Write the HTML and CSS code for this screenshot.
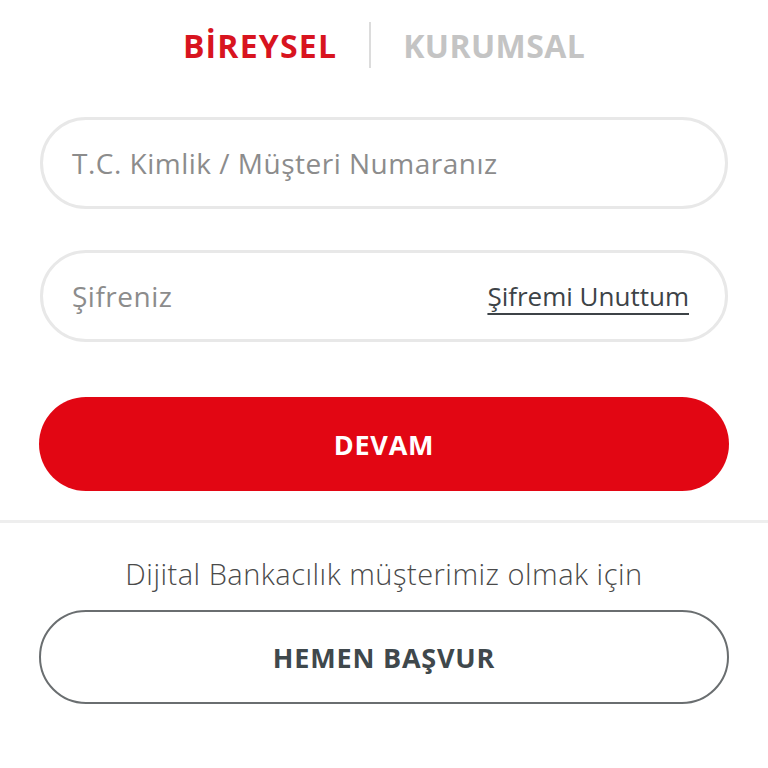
FILE: index.html
```html
<!DOCTYPE html>
<html lang="tr">
<head>
<meta charset="utf-8">
<link rel="stylesheet" href="styles.css">
</head>
<body>
<main class="page">
  <nav class="tabs">
    <span class="tab tab-active">BİREYSEL</span>
    <span class="tab-divider"></span>
    <span class="tab">KURUMSAL</span>
  </nav>
  <form class="login">
    <div class="field">
      <span class="placeholder">T.C. Kimlik / Müşteri Numaranız</span>
    </div>
    <div class="field field-password">
      <span class="placeholder">Şifreniz</span>
      <a class="forgot">Şifremi Unuttum</a>
    </div>
    <button type="button" class="btn-primary">DEVAM</button>
  </form>
  <hr class="separator">
  <section class="apply">
    <p class="apply-text">Dijital Bankacılık müşterimiz olmak için</p>
    <button type="button" class="btn-outline">HEMEN BAŞVUR</button>
  </section>
</main>
</body>
</html>
```
FILE: styles.css
```css
* { box-sizing: border-box; }
html, body { margin: 0; padding: 0; background: #fff; }
body { font-family: "Open Sans", "Noto Sans", sans-serif; }

.page { display: flex; flex-direction: column; }

.tabs {
  display: flex;
  justify-content: center;
  align-items: center;
  gap: 32px;
  margin-top: 22px;
  height: 46px;
}
.tab {
  font-size: 32px;
  font-weight: 700;
  color: #c4c4c4;
  letter-spacing: 0.4px;
}
.tab-active { color: #d8141f; letter-spacing: 1.2px; }
.tab-divider {
  width: 2px;
  height: 46px;
  background: #dcdcdc;
}

.login {
  display: flex;
  flex-direction: column;
  padding: 0 39px;
  margin-top: 49px;
}
.field {
  height: 92px;
  border: 3px solid #e8e8e8;
  border-radius: 46px;
  display: flex;
  align-items: center;
  justify-content: space-between;
  padding: 0 36px 0 29px;
  margin: 0 1px;
}
.field + .field { margin-top: 41px; }
.placeholder {
  font-size: 28px;
  letter-spacing: 0.5px;
  color: #8c8c8c;
}
.forgot {
  font-size: 26px;
  color: #3d4347;
  text-decoration: underline;
  text-decoration-thickness: 2px;
  text-underline-offset: 7px;
}
.btn-primary {
  margin-top: 55px;
  height: 94px;
  border: 0;
  border-radius: 47px;
  background: #e20613;
  color: #fff;
  font-family: inherit;
  font-size: 27px;
  font-weight: 700;
  letter-spacing: 0.8px;
}

.separator {
  margin: 29px 0 0;
  border: 0;
  height: 3px;
  background: #eeeeee;
}

.apply {
  display: flex;
  flex-direction: column;
  padding: 0 39px;
}
.apply-text {
  margin: 31px 0 0;
  text-align: center;
  font-size: 29px;
  font-weight: 300;
  letter-spacing: 0.5px;
  color: #4a4a4a;
}
.btn-outline {
  margin-top: 17px;
  height: 94px;
  border: 2px solid #6a6e70;
  border-radius: 47px;
  background: #fff;
  color: #3f484c;
  font-family: inherit;
  font-size: 27px;
  font-weight: 700;
  letter-spacing: 0.8px;
}
```
